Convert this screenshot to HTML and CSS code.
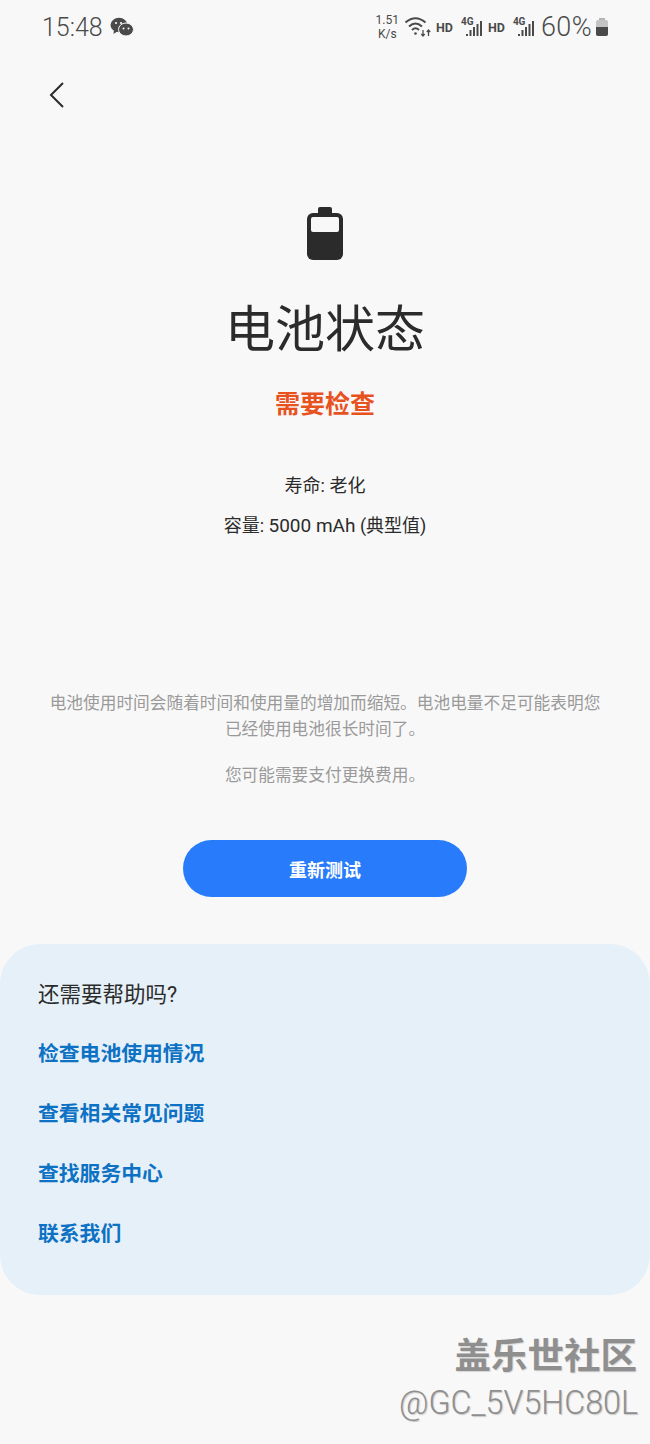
FILE: index.html
```html
<!DOCTYPE html>
<html lang="zh-CN">
<head>
    <meta charset="UTF-8">
    <meta name="viewport" content="width=device-width, initial-scale=1.0">
    <title>电池状态</title>
    <link rel="stylesheet" href="styles.css">
</head>
<body>
    <header class="status-bar">
        <div class="status-left">
            <span class="clock">15:48</span>
            <svg class="wechat-icon" width="24" height="20" viewBox="0 0 24 20">
                <ellipse cx="9" cy="8" rx="8.5" ry="7.2" fill="#4a4a4a"/>
                <path d="M4 12 L3.5 17 L8 14 Z" fill="#4a4a4a"/>
                <ellipse cx="16" cy="12.5" rx="7.5" ry="6.5" fill="#4a4a4a" stroke="#f8f8f8" stroke-width="1"/>
                <circle cx="6" cy="6" r="1.1" fill="#f8f8f8"/>
                <circle cx="11" cy="6" r="1.1" fill="#f8f8f8"/>
                <circle cx="13.5" cy="11.5" r="1" fill="#f8f8f8"/>
                <circle cx="18.5" cy="11.5" r="1" fill="#f8f8f8"/>
            </svg>
        </div>
        <div class="status-right">
            <span class="net-speed">1.51<br>K/s</span>
            <svg class="wifi-icon" width="26" height="20" viewBox="0 0 26 20" fill="none" stroke="#4a4a4a" stroke-width="2">
                <path d="M0.5 5.5 Q10.5 -3 20.5 5.5"/>
                <path d="M4 9.5 Q10.5 3.5 17 9.5"/>
                <path d="M7 13 Q10.5 9.5 14 13"/>
                <circle cx="10.5" cy="16.5" r="1.3" fill="#4a4a4a" stroke="none"/>
                <path d="M18 13 V19 M16.3 17 L18 19 L19.7 17" stroke-width="1.3"/>
                <path d="M23.5 19 V13 M21.8 15 L23.5 13 L25.2 15" stroke-width="1.3"/>
            </svg>
            <span class="hd">HD</span>
            <span class="signal">
                <span class="signal-label">4G</span>
                <svg width="23" height="20" viewBox="0 0 23 20" fill="#4a4a4a">
                    <rect x="6" y="17" width="2" height="2"/>
                    <rect x="9.5" y="13" width="2" height="6"/>
                    <rect x="13" y="10" width="2" height="9"/>
                    <rect x="16.5" y="7" width="2" height="12"/>
                    <rect x="20" y="4" width="2" height="15"/>
                </svg>
            </span>
            <span class="hd">HD</span>
            <span class="signal">
                <span class="signal-label">4G</span>
                <svg width="23" height="20" viewBox="0 0 23 20" fill="#4a4a4a">
                    <rect x="6" y="17" width="2" height="2"/>
                    <rect x="9.5" y="13" width="2" height="6"/>
                    <rect x="13" y="10" width="2" height="9"/>
                    <rect x="16.5" y="7" width="2" height="12"/>
                    <rect x="20" y="4" width="2" height="15"/>
                </svg>
            </span>
            <span class="percent">60%</span>
            <svg class="mini-battery" width="14" height="20" viewBox="0 0 14 20">
                <rect x="4" y="1" width="6" height="2" fill="#b5b5b5"/>
                <rect x="1" y="3" width="12" height="16" rx="2" fill="#c4c4c4"/>
                <path d="M1 10 H13 V17 a2 2 0 0 1 -2 2 H3 a2 2 0 0 1 -2 -2 Z" fill="#4a4a4a"/>
            </svg>
        </div>
    </header>

    <nav class="top-nav">
        <svg width="18" height="28" viewBox="0 0 18 28" fill="none" stroke="#2b2b2b" stroke-width="2">
            <path d="M15 2 L3 14 L15 26"/>
        </svg>
    </nav>

    <main>
        <section class="summary">
            <svg class="battery-icon" width="38" height="54" viewBox="0 0 38 54">
                <path d="M14 0 H24 a2 2 0 0 1 2 2 V7 H12 V2 a2 2 0 0 1 2 -2 Z" fill="#2b2b2b"/>
                <rect x="1" y="6" width="36" height="47" rx="6" fill="#2b2b2b"/>
                <rect x="5" y="10" width="28" height="15" rx="2" fill="#f8f8f8"/>
            </svg>
            <h1 class="title">电池状态</h1>
            <p class="state">需要检查</p>
            <p class="detail detail-first">寿命: 老化</p>
            <p class="detail">容量: <span class="detail-value">5000 mAh</span> (典型值)</p>
        </section>

        <section class="notes">
            <p class="note">电池使用时间会随着时间和使用量的增加而缩短。电池电量不足可能表明您已经使用电池很长时间了。</p>
            <p class="note">您可能需要支付更换费用。</p>
        </section>

        <div class="action">
            <a href="#" class="retest-btn">重新测试</a>
        </div>

        <section class="help-card">
            <h2 class="help-title">还需要帮助吗?</h2>
            <a href="#" class="help-link">检查电池使用情况</a>
            <a href="#" class="help-link">查看相关常见问题</a>
            <a href="#" class="help-link">查找服务中心</a>
            <a href="#" class="help-link">联系我们</a>
        </section>
    </main>

    <footer class="watermark">
        <div class="watermark-name">盖乐世社区</div>
        <div class="watermark-user">@GC_5V5HC80L</div>
    </footer>
</body>
</html>
```

FILE: styles.css
```css
body {
    font-family: Roboto, "Noto Sans CJK SC", sans-serif;
    margin: 0;
    padding: 0;
    background-color: #f8f8f8;
    color: #2b2b2b;
    height: 1444px;
    overflow: hidden;
}
.status-bar {
    height: 54px;
    padding: 0 41px 0 42px;
    display: flex;
    justify-content: space-between;
    align-items: center;
    color: #4a4a4a;
}
.status-left {
    display: flex;
    align-items: center;
    gap: 7px;
}
.clock {
    font-size: 25px;
    font-weight: 300;
}
.status-right {
    display: flex;
    align-items: center;
}
.net-speed {
    font-size: 12px;
    line-height: 14px;
    text-align: center;
    margin-right: 6px;
}
.hd {
    font-size: 12.5px;
    font-weight: bold;
    margin: 0 7px 0 5px;
}
.signal {
    position: relative;
    display: flex;
}
.signal-label {
    position: absolute;
    left: 1px;
    top: -1px;
    font-size: 10px;
    font-weight: bold;
}
.percent {
    font-size: 27px;
    font-weight: 300;
    letter-spacing: 0.4px;
    margin: 0 3px 0 6px;
}
.top-nav {
    height: 82px;
    padding-left: 48px;
    display: flex;
    align-items: center;
}
main {
    display: flex;
    flex-direction: column;
}
.summary {
    display: flex;
    flex-direction: column;
    align-items: center;
    padding-top: 71px;
}
.battery-icon {
    display: block;
}
.title {
    font-size: 50px;
    font-weight: normal;
    line-height: 60px;
    margin: 39px 0 0 0;
}
.state {
    font-size: 25px;
    font-weight: bold;
    color: #e8521e;
    line-height: 32px;
    margin: 29px 0 0 0;
}
.detail {
    font-size: 18px;
    line-height: 26px;
    margin: 14px 0 0 0;
}
.detail-first {
    margin-top: 52px;
}
.detail-value {
    font-size: 19px;
}
.notes {
    padding: 0 48px;
    margin-top: 152px;
}
.note {
    font-size: 16.7px;
    line-height: 26px;
    color: #9a9a9a;
    text-align: center;
    margin: 0 0 20px 0;
}
.action {
    display: flex;
    justify-content: center;
    margin-top: 31px;
}
.retest-btn {
    width: 284px;
    height: 57px;
    background-color: #287cfb;
    color: white;
    border-radius: 29px;
    font-size: 18px;
    font-weight: bold;
    text-decoration: none;
    display: flex;
    align-items: center;
    justify-content: center;
}
.help-card {
    margin-top: 47px;
    height: 351px;
    box-sizing: border-box;
    padding: 37px 38px 0 38px;
    background-color: #e6f0f8;
    border-radius: 40px;
    display: flex;
    flex-direction: column;
}
.help-title {
    font-size: 21.5px;
    font-weight: normal;
    line-height: 28px;
    margin: 0 0 31px 0;
}
.help-link {
    font-size: 20.8px;
    font-weight: bold;
    line-height: 28px;
    color: #0d72c4;
    text-decoration: none;
    margin-bottom: 32px;
}
.watermark {
    position: absolute;
    right: 12px;
    top: 1334px;
    text-align: right;
    color: #8f8f8f;
}
.watermark-name {
    font-size: 36.5px;
    font-weight: bold;
    line-height: 46px;
    margin-right: 1px;
    text-shadow: 1px 1px 1px #d8d8d8;
}
.watermark-user {
    font-size: 32.3px;
    font-weight: 300;
    line-height: 42px;
    margin-top: 2px;
    text-shadow: 1px 1px 1px #c8c8c8;
}
```
